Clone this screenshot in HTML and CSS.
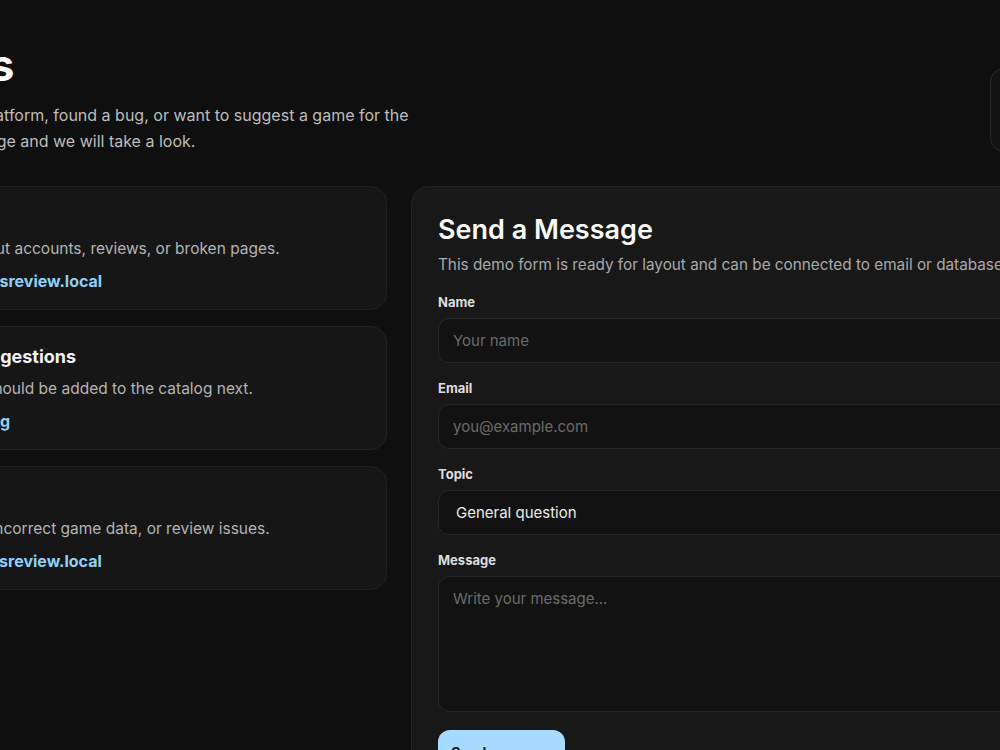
FILE: index.html
```html
<!DOCTYPE html>
<html lang="en">
<head>
    <meta charset="UTF-8">
    <meta name="viewport" content="width=device-width, initial-scale=1.0">
    <title>Contact Us - Games Review</title>
    <link rel="stylesheet" href="styles.css">
</head>
<body>
    <div class="viewport">
        <main class="page">

            <!-- Hero -->
            <section class="hero">
                <div class="hero-text">
                    <h1>Contact Us</h1>
                    <p>Have a question about the platform, found a bug, or want to suggest a game for the games list? Send us a message and we will take a look.</p>
                </div>
                <div class="hero-box"></div>
            </section>

            <!-- Contact channels + form -->
            <section class="contact-grid">
                <div class="channels">
                    <div class="channel">
                        <h3>Support</h3>
                        <p>Get help on questions about accounts, reviews, or broken pages.</p>
                        <a href="#">Email us: support@gamesreview.local</a>
                    </div>
                    <div class="channel">
                        <h3>Features and Title Suggestions</h3>
                        <p>Suggest any games that should be added to the catalog next.</p>
                        <a href="#">Browse the games catalog</a>
                    </div>
                    <div class="channel">
                        <h3>Bug Reports</h3>
                        <p>Report a bug, dead links, incorrect game data, or review issues.</p>
                        <a href="#">Email us: reviews@gamesreview.local</a>
                    </div>
                </div>

                <form class="message-card" onsubmit="return false;">
                    <h2>Send a Message</h2>
                    <p class="form-note">This demo form is ready for layout and can be connected to email or database later.</p>

                    <div class="field">
                        <label for="name">Name</label>
                        <input type="text" id="name" placeholder="Your name">
                    </div>
                    <div class="field">
                        <label for="email">Email</label>
                        <input type="email" id="email" placeholder="you@example.com">
                    </div>
                    <div class="field">
                        <label for="topic">Topic</label>
                        <select id="topic">
                            <option>General question</option>
                            <option>Bug report</option>
                            <option>Game suggestion</option>
                        </select>
                    </div>
                    <div class="field">
                        <label for="message">Message</label>
                        <textarea id="message" placeholder="Write your message..."></textarea>
                    </div>

                    <button type="submit" class="send-btn">Send message</button>
                </form>
            </section>
        </main>
    </div>
</body>
</html>
```

FILE: styles.css
```css
/* General */
body {
    margin: 0;
    padding: 0;
    background-color: #0f0f0f;
    color: #f2f2f2;
    font-family: Inter, 'Noto Sans', Arial, sans-serif;
}

.viewport {
    width: 100%;
    height: 100vh;
    overflow: hidden;
}

/* page is wider than the window and scrolled to the left */
.page {
    width: 1331px;
    margin-left: -221px;
    padding-top: 40px;
}

/* Hero */
.hero {
    display: flex;
    justify-content: space-between;
    align-items: flex-end;
}

.hero h1 {
    margin: 0;
    font-size: 43.5px;
    line-height: 50px;
    font-weight: 700;
    color: #fff;
}

.hero p {
    margin: 12px 0 0;
    max-width: 632px;
    font-size: 16px;
    line-height: 26px;
    color: #bdbdbd;
}

.hero-box {
    width: 120px;
    height: 84px;
    margin-bottom: 2px;
    box-sizing: border-box;
    border: 1px solid #2a2a2a;
    border-radius: 14px;
    background-color: #131313;
}

/* Grid */
.contact-grid {
    display: grid;
    grid-template-columns: 608px 1fr;
    gap: 24px;
    margin-top: 32px;
    align-items: start;
}

.channels {
    display: flex;
    flex-direction: column;
    gap: 16px;
}

.channel {
    background-color: #161616;
    border: 1px solid #222;
    border-radius: 16px;
    padding: 19px 24px 17px;
}

.channel h3 {
    margin: 0;
    font-size: 18px;
    line-height: 22px;
    font-weight: 700;
    color: #f4f4f4;
}

.channel p {
    margin: 10px 0 0;
    font-size: 15.5px;
    line-height: 22px;
    color: #b4b4b4;
}

.channel a {
    display: block;
    margin-top: 10px;
    font-size: 16px;
    line-height: 22px;
    font-weight: 700;
    color: #8fd0f7;
    text-decoration: none;
}

/* Form */
.message-card {
    background-color: #181818;
    border: 1px solid #242424;
    border-radius: 18px;
    padding: 25px 26px 28px;
}

.message-card h2 {
    margin: 0;
    font-size: 27px;
    line-height: 36px;
    font-weight: 600;
    color: #fafafa;
}

.form-note {
    margin: 6px 0 17px;
    font-size: 15.3px;
    line-height: 22px;
    color: #a9a9a9;
    white-space: nowrap;
}

.field {
    display: flex;
    flex-direction: column;
    margin-bottom: 16px;
}

.field label {
    font-size: 13px;
    line-height: 18px;
    font-weight: 700;
    color: #dedede;
    margin-bottom: 7px;
}

.field input,
.field select,
.field textarea {
    box-sizing: border-box;
    width: 100%;
    height: 45px;
    padding: 0 14px;
    background-color: #121212;
    border: 1px solid #262626;
    border-radius: 11px;
    color: #ececec;
    font-family: inherit;
    font-size: 15px;
    outline: none;
}

.field select {
    appearance: none;
    padding-left: 17px;
}

.field textarea {
    height: 136px;
    padding: 12px 14px;
    line-height: 20px;
    resize: none;
}

.field input::placeholder,
.field textarea::placeholder {
    color: #6b6b6b;
}

.send-btn {
    margin-top: 2px;
    width: 127px;
    height: 44px;
    border: none;
    border-radius: 12px;
    background-color: #a6dbff;
    color: #0d1b26;
    font-family: inherit;
    font-size: 14px;
    font-weight: 700;
    cursor: pointer;
}
```
